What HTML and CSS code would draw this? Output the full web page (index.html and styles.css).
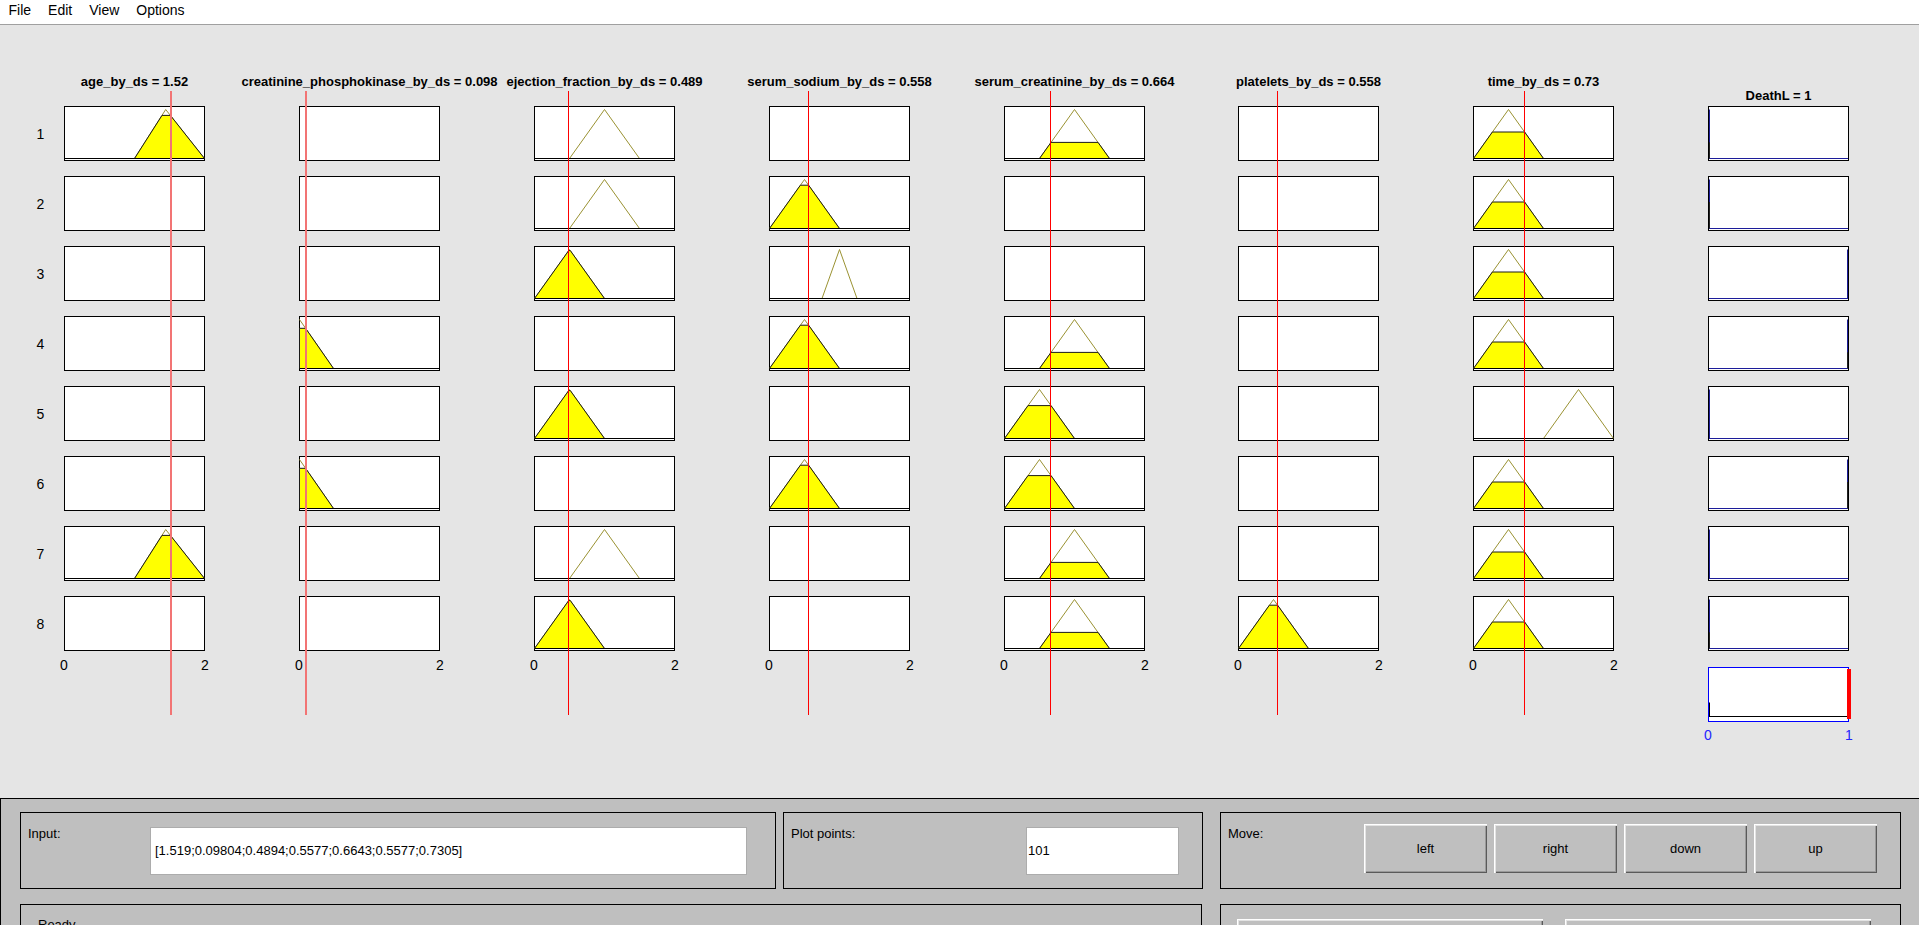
FILE: index.html
```html
<!DOCTYPE html>
<html>
<head>
<meta charset="utf-8">
<title>Rule Viewer</title>
<link rel="stylesheet" href="styles.css">
</head>
<body>
<div class="menubar"><span class="mi">File</span><span class="mi">Edit</span><span class="mi">View</span><span class="mi">Options</span></div>

<div class="main">
  <div class="rowlabels">
    <div class="rl">1</div><div class="rl">2</div><div class="rl">3</div><div class="rl">4</div>
    <div class="rl">5</div><div class="rl">6</div><div class="rl">7</div><div class="rl">8</div>
  </div>

  <div class="cols">
    <!-- age -->
    <div class="col">
      <div class="title">age_by_ds = 1.52</div>
      <div class="boxes">
        <svg class="box" viewBox="0 0 141 55"><rect class="bx" x="0.5" y="0.5" width="140" height="54"/><polyline class="mf" points="70.5,52.5 101.7,3.5 140.5,52.5"/><polygon class="fill" points="70.5,52.5 98,9.4 106.4,9.4 140.5,52.5"/><line class="base" x1="0.5" y1="52.5" x2="140.5" y2="52.5"/></svg>
        <svg class="box" viewBox="0 0 141 55"><rect class="bx" x="0.5" y="0.5" width="140" height="54"/></svg>
        <svg class="box" viewBox="0 0 141 55"><rect class="bx" x="0.5" y="0.5" width="140" height="54"/></svg>
        <svg class="box" viewBox="0 0 141 55"><rect class="bx" x="0.5" y="0.5" width="140" height="54"/></svg>
        <svg class="box" viewBox="0 0 141 55"><rect class="bx" x="0.5" y="0.5" width="140" height="54"/></svg>
        <svg class="box" viewBox="0 0 141 55"><rect class="bx" x="0.5" y="0.5" width="140" height="54"/></svg>
        <svg class="box" viewBox="0 0 141 55"><rect class="bx" x="0.5" y="0.5" width="140" height="54"/><polyline class="mf" points="70.5,52.5 101.7,3.5 140.5,52.5"/><polygon class="fill" points="70.5,52.5 98,9.4 106.4,9.4 140.5,52.5"/><line class="base" x1="0.5" y1="52.5" x2="140.5" y2="52.5"/></svg>
        <svg class="box" viewBox="0 0 141 55"><rect class="bx" x="0.5" y="0.5" width="140" height="54"/></svg>
      </div>
      <div class="ticks"><span>0</span><span>2</span></div>
      <div class="cursor wide" style="left:106px"></div>
    </div>

    <!-- creatinine_phosphokinase -->
    <div class="col">
      <div class="title">creatinine_phosphokinase_by_ds = 0.098</div>
      <div class="boxes">
        <svg class="box" viewBox="0 0 141 55"><rect class="bx" x="0.5" y="0.5" width="140" height="54"/></svg>
        <svg class="box" viewBox="0 0 141 55"><rect class="bx" x="0.5" y="0.5" width="140" height="54"/></svg>
        <svg class="box" viewBox="0 0 141 55"><rect class="bx" x="0.5" y="0.5" width="140" height="54"/></svg>
        <svg class="box" viewBox="0 0 141 55"><rect class="bx" x="0.5" y="0.5" width="140" height="54"/><polyline class="mf" points="0.5,3.5 34.5,52.5"/><polygon class="fill" points="0.5,52.5 0.5,12.3 6.6,12.3 34.5,52.5"/><line class="base" x1="0.5" y1="52.5" x2="140.5" y2="52.5"/></svg>
        <svg class="box" viewBox="0 0 141 55"><rect class="bx" x="0.5" y="0.5" width="140" height="54"/></svg>
        <svg class="box" viewBox="0 0 141 55"><rect class="bx" x="0.5" y="0.5" width="140" height="54"/><polyline class="mf" points="0.5,3.5 34.5,52.5"/><polygon class="fill" points="0.5,52.5 0.5,12.3 6.6,12.3 34.5,52.5"/><line class="base" x1="0.5" y1="52.5" x2="140.5" y2="52.5"/></svg>
        <svg class="box" viewBox="0 0 141 55"><rect class="bx" x="0.5" y="0.5" width="140" height="54"/></svg>
        <svg class="box" viewBox="0 0 141 55"><rect class="bx" x="0.5" y="0.5" width="140" height="54"/></svg>
      </div>
      <div class="ticks"><span>0</span><span>2</span></div>
      <div class="cursor wide" style="left:6px"></div>
    </div>

    <!-- ejection_fraction -->
    <div class="col">
      <div class="title">ejection_fraction_by_ds = 0.489</div>
      <div class="boxes">
        <svg class="box" viewBox="0 0 141 55"><rect class="bx" x="0.5" y="0.5" width="140" height="54"/><polyline class="mf" points="35.5,52.5 70.5,3.5 105.5,52.5"/><line class="base" x1="0.5" y1="52.5" x2="140.5" y2="52.5"/></svg>
        <svg class="box" viewBox="0 0 141 55"><rect class="bx" x="0.5" y="0.5" width="140" height="54"/><polyline class="mf" points="35.5,52.5 70.5,3.5 105.5,52.5"/><line class="base" x1="0.5" y1="52.5" x2="140.5" y2="52.5"/></svg>
        <svg class="box" viewBox="0 0 141 55"><rect class="bx" x="0.5" y="0.5" width="140" height="54"/><polyline class="mf" points="0.5,52.5 35.5,3.5 70.5,52.5"/><polygon class="fill" points="0.5,52.5 34.7,4.6 36.3,4.6 70.5,52.5"/><line class="base" x1="0.5" y1="52.5" x2="140.5" y2="52.5"/></svg>
        <svg class="box" viewBox="0 0 141 55"><rect class="bx" x="0.5" y="0.5" width="140" height="54"/></svg>
        <svg class="box" viewBox="0 0 141 55"><rect class="bx" x="0.5" y="0.5" width="140" height="54"/><polyline class="mf" points="0.5,52.5 35.5,3.5 70.5,52.5"/><polygon class="fill" points="0.5,52.5 34.7,4.6 36.3,4.6 70.5,52.5"/><line class="base" x1="0.5" y1="52.5" x2="140.5" y2="52.5"/></svg>
        <svg class="box" viewBox="0 0 141 55"><rect class="bx" x="0.5" y="0.5" width="140" height="54"/></svg>
        <svg class="box" viewBox="0 0 141 55"><rect class="bx" x="0.5" y="0.5" width="140" height="54"/><polyline class="mf" points="35.5,52.5 70.5,3.5 105.5,52.5"/><line class="base" x1="0.5" y1="52.5" x2="140.5" y2="52.5"/></svg>
        <svg class="box" viewBox="0 0 141 55"><rect class="bx" x="0.5" y="0.5" width="140" height="54"/><polyline class="mf" points="0.5,52.5 35.5,3.5 70.5,52.5"/><polygon class="fill" points="0.5,52.5 34.7,4.6 36.3,4.6 70.5,52.5"/><line class="base" x1="0.5" y1="52.5" x2="140.5" y2="52.5"/></svg>
      </div>
      <div class="ticks"><span>0</span><span>2</span></div>
      <div class="cursor" style="left:34px"></div>
    </div>

    <!-- serum_sodium -->
    <div class="col">
      <div class="title">serum_sodium_by_ds = 0.558</div>
      <div class="boxes">
        <svg class="box" viewBox="0 0 141 55"><rect class="bx" x="0.5" y="0.5" width="140" height="54"/></svg>
        <svg class="box" viewBox="0 0 141 55"><rect class="bx" x="0.5" y="0.5" width="140" height="54"/><polyline class="mf" points="0.5,52.5 35.5,3.5 70.5,52.5"/><polygon class="fill" points="0.5,52.5 31.4,9.2 39.6,9.2 70.5,52.5"/><line class="base" x1="0.5" y1="52.5" x2="140.5" y2="52.5"/></svg>
        <svg class="box" viewBox="0 0 141 55"><rect class="bx" x="0.5" y="0.5" width="140" height="54"/><polyline class="mf" points="53,52.5 70.5,3.5 88,52.5"/><line class="base" x1="0.5" y1="52.5" x2="140.5" y2="52.5"/></svg>
        <svg class="box" viewBox="0 0 141 55"><rect class="bx" x="0.5" y="0.5" width="140" height="54"/><polyline class="mf" points="0.5,52.5 35.5,3.5 70.5,52.5"/><polygon class="fill" points="0.5,52.5 31.4,9.2 39.6,9.2 70.5,52.5"/><line class="base" x1="0.5" y1="52.5" x2="140.5" y2="52.5"/></svg>
        <svg class="box" viewBox="0 0 141 55"><rect class="bx" x="0.5" y="0.5" width="140" height="54"/></svg>
        <svg class="box" viewBox="0 0 141 55"><rect class="bx" x="0.5" y="0.5" width="140" height="54"/><polyline class="mf" points="0.5,52.5 35.5,3.5 70.5,52.5"/><polygon class="fill" points="0.5,52.5 31.4,9.2 39.6,9.2 70.5,52.5"/><line class="base" x1="0.5" y1="52.5" x2="140.5" y2="52.5"/></svg>
        <svg class="box" viewBox="0 0 141 55"><rect class="bx" x="0.5" y="0.5" width="140" height="54"/></svg>
        <svg class="box" viewBox="0 0 141 55"><rect class="bx" x="0.5" y="0.5" width="140" height="54"/></svg>
      </div>
      <div class="ticks"><span>0</span><span>2</span></div>
      <div class="cursor" style="left:39px"></div>
    </div>

    <!-- serum_creatinine -->
    <div class="col">
      <div class="title">serum_creatinine_by_ds = 0.664</div>
      <div class="boxes">
        <svg class="box" viewBox="0 0 141 55"><rect class="bx" x="0.5" y="0.5" width="140" height="54"/><polyline class="mf" points="35.5,52.5 70.5,3.5 105.5,52.5"/><polygon class="fill" points="35.5,52.5 47,36.4 94,36.4 105.5,52.5"/><line class="base" x1="0.5" y1="52.5" x2="140.5" y2="52.5"/></svg>
        <svg class="box" viewBox="0 0 141 55"><rect class="bx" x="0.5" y="0.5" width="140" height="54"/></svg>
        <svg class="box" viewBox="0 0 141 55"><rect class="bx" x="0.5" y="0.5" width="140" height="54"/></svg>
        <svg class="box" viewBox="0 0 141 55"><rect class="bx" x="0.5" y="0.5" width="140" height="54"/><polyline class="mf" points="35.5,52.5 70.5,3.5 105.5,52.5"/><polygon class="fill" points="35.5,52.5 47,36.4 94,36.4 105.5,52.5"/><line class="base" x1="0.5" y1="52.5" x2="140.5" y2="52.5"/></svg>
        <svg class="box" viewBox="0 0 141 55"><rect class="bx" x="0.5" y="0.5" width="140" height="54"/><polyline class="mf" points="0.5,52.5 35.5,3.5 70.5,52.5"/><polygon class="fill" points="0.5,52.5 24,19.6 47,19.6 70.5,52.5"/><line class="base" x1="0.5" y1="52.5" x2="140.5" y2="52.5"/></svg>
        <svg class="box" viewBox="0 0 141 55"><rect class="bx" x="0.5" y="0.5" width="140" height="54"/><polyline class="mf" points="0.5,52.5 35.5,3.5 70.5,52.5"/><polygon class="fill" points="0.5,52.5 24,19.6 47,19.6 70.5,52.5"/><line class="base" x1="0.5" y1="52.5" x2="140.5" y2="52.5"/></svg>
        <svg class="box" viewBox="0 0 141 55"><rect class="bx" x="0.5" y="0.5" width="140" height="54"/><polyline class="mf" points="35.5,52.5 70.5,3.5 105.5,52.5"/><polygon class="fill" points="35.5,52.5 47,36.4 94,36.4 105.5,52.5"/><line class="base" x1="0.5" y1="52.5" x2="140.5" y2="52.5"/></svg>
        <svg class="box" viewBox="0 0 141 55"><rect class="bx" x="0.5" y="0.5" width="140" height="54"/><polyline class="mf" points="35.5,52.5 70.5,3.5 105.5,52.5"/><polygon class="fill" points="35.5,52.5 47,36.4 94,36.4 105.5,52.5"/><line class="base" x1="0.5" y1="52.5" x2="140.5" y2="52.5"/></svg>
      </div>
      <div class="ticks"><span>0</span><span>2</span></div>
      <div class="cursor" style="left:46px"></div>
    </div>

    <!-- platelets -->
    <div class="col shift">
      <div class="title">platelets_by_ds = 0.558</div>
      <div class="boxes">
        <svg class="box" viewBox="0 0 141 55"><rect class="bx" x="0.5" y="0.5" width="140" height="54"/></svg>
        <svg class="box" viewBox="0 0 141 55"><rect class="bx" x="0.5" y="0.5" width="140" height="54"/></svg>
        <svg class="box" viewBox="0 0 141 55"><rect class="bx" x="0.5" y="0.5" width="140" height="54"/></svg>
        <svg class="box" viewBox="0 0 141 55"><rect class="bx" x="0.5" y="0.5" width="140" height="54"/></svg>
        <svg class="box" viewBox="0 0 141 55"><rect class="bx" x="0.5" y="0.5" width="140" height="54"/></svg>
        <svg class="box" viewBox="0 0 141 55"><rect class="bx" x="0.5" y="0.5" width="140" height="54"/></svg>
        <svg class="box" viewBox="0 0 141 55"><rect class="bx" x="0.5" y="0.5" width="140" height="54"/></svg>
        <svg class="box" viewBox="0 0 141 55"><rect class="bx" x="0.5" y="0.5" width="140" height="54"/><polyline class="mf" points="0.5,52.5 35.5,3.5 70.5,52.5"/><polygon class="fill" points="0.5,52.5 31.4,9.2 39.6,9.2 70.5,52.5"/><line class="base" x1="0.5" y1="52.5" x2="140.5" y2="52.5"/></svg>
      </div>
      <div class="ticks"><span>0</span><span>2</span></div>
      <div class="cursor" style="left:39px"></div>
    </div>

    <!-- time -->
    <div class="col">
      <div class="title">time_by_ds = 0.73</div>
      <div class="boxes">
        <svg class="box" viewBox="0 0 141 55"><rect class="bx" x="0.5" y="0.5" width="140" height="54"/><polyline class="mf" points="0.5,52.5 35.5,3.5 70.5,52.5"/><polygon class="fill" points="0.5,52.5 19.4,26 51.6,26 70.5,52.5"/><line class="base" x1="0.5" y1="52.5" x2="140.5" y2="52.5"/></svg>
        <svg class="box" viewBox="0 0 141 55"><rect class="bx" x="0.5" y="0.5" width="140" height="54"/><polyline class="mf" points="0.5,52.5 35.5,3.5 70.5,52.5"/><polygon class="fill" points="0.5,52.5 19.4,26 51.6,26 70.5,52.5"/><line class="base" x1="0.5" y1="52.5" x2="140.5" y2="52.5"/></svg>
        <svg class="box" viewBox="0 0 141 55"><rect class="bx" x="0.5" y="0.5" width="140" height="54"/><polyline class="mf" points="0.5,52.5 35.5,3.5 70.5,52.5"/><polygon class="fill" points="0.5,52.5 19.4,26 51.6,26 70.5,52.5"/><line class="base" x1="0.5" y1="52.5" x2="140.5" y2="52.5"/></svg>
        <svg class="box" viewBox="0 0 141 55"><rect class="bx" x="0.5" y="0.5" width="140" height="54"/><polyline class="mf" points="0.5,52.5 35.5,3.5 70.5,52.5"/><polygon class="fill" points="0.5,52.5 19.4,26 51.6,26 70.5,52.5"/><line class="base" x1="0.5" y1="52.5" x2="140.5" y2="52.5"/></svg>
        <svg class="box" viewBox="0 0 141 55"><rect class="bx" x="0.5" y="0.5" width="140" height="54"/><polyline class="mf" points="70.5,52.5 105.5,3.5 140.5,52.5"/><line class="base" x1="0.5" y1="52.5" x2="140.5" y2="52.5"/></svg>
        <svg class="box" viewBox="0 0 141 55"><rect class="bx" x="0.5" y="0.5" width="140" height="54"/><polyline class="mf" points="0.5,52.5 35.5,3.5 70.5,52.5"/><polygon class="fill" points="0.5,52.5 19.4,26 51.6,26 70.5,52.5"/><line class="base" x1="0.5" y1="52.5" x2="140.5" y2="52.5"/></svg>
        <svg class="box" viewBox="0 0 141 55"><rect class="bx" x="0.5" y="0.5" width="140" height="54"/><polyline class="mf" points="0.5,52.5 35.5,3.5 70.5,52.5"/><polygon class="fill" points="0.5,52.5 19.4,26 51.6,26 70.5,52.5"/><line class="base" x1="0.5" y1="52.5" x2="140.5" y2="52.5"/></svg>
        <svg class="box" viewBox="0 0 141 55"><rect class="bx" x="0.5" y="0.5" width="140" height="54"/><polyline class="mf" points="0.5,52.5 35.5,3.5 70.5,52.5"/><polygon class="fill" points="0.5,52.5 19.4,26 51.6,26 70.5,52.5"/><line class="base" x1="0.5" y1="52.5" x2="140.5" y2="52.5"/></svg>
      </div>
      <div class="ticks"><span>0</span><span>2</span></div>
      <div class="cursor" style="left:51px"></div>
    </div>

    <!-- DeathL output -->
    <div class="col">
      <div class="title out">DeathL = 1</div>
      <div class="boxes">
        <svg class="box" viewBox="0 0 141 55"><rect class="bx" x="0.5" y="0.5" width="140" height="54"/><line class="ob" x1="1" y1="52.5" x2="140" y2="52.5"/><line class="ob" x1="1.5" y1="3.5" x2="1.5" y2="52.5"/><line class="ok" x1="1.5" y1="36.3" x2="1.5" y2="52.5"/></svg>
        <svg class="box" viewBox="0 0 141 55"><rect class="bx" x="0.5" y="0.5" width="140" height="54"/><line class="ob" x1="1" y1="52.5" x2="140" y2="52.5"/><line class="ob" x1="1.5" y1="3.5" x2="1.5" y2="52.5"/><line class="ok" x1="1.5" y1="26" x2="1.5" y2="52.5"/></svg>
        <svg class="box" viewBox="0 0 141 55"><rect class="bx" x="0.5" y="0.5" width="140" height="54"/><line class="ob" x1="1" y1="52.5" x2="140" y2="52.5"/><line class="ob" x1="139.5" y1="3.5" x2="139.5" y2="52.5"/></svg>
        <svg class="box" viewBox="0 0 141 55"><rect class="bx" x="0.5" y="0.5" width="140" height="54"/><line class="ob" x1="1" y1="52.5" x2="140" y2="52.5"/><line class="ob" x1="139.5" y1="3.5" x2="139.5" y2="52.5"/><line class="ok" x1="139.5" y1="36.3" x2="139.5" y2="52.5"/></svg>
        <svg class="box" viewBox="0 0 141 55"><rect class="bx" x="0.5" y="0.5" width="140" height="54"/><line class="ob" x1="1" y1="52.5" x2="140" y2="52.5"/><line class="ob" x1="1.5" y1="3.5" x2="1.5" y2="52.5"/></svg>
        <svg class="box" viewBox="0 0 141 55"><rect class="bx" x="0.5" y="0.5" width="140" height="54"/><line class="ob" x1="1" y1="52.5" x2="140" y2="52.5"/><line class="ob" x1="139.5" y1="3.5" x2="139.5" y2="52.5"/><line class="ok" x1="139.5" y1="26" x2="139.5" y2="52.5"/></svg>
        <svg class="box" viewBox="0 0 141 55"><rect class="bx" x="0.5" y="0.5" width="140" height="54"/><line class="ob" x1="1" y1="52.5" x2="140" y2="52.5"/><line class="ob" x1="1.5" y1="3.5" x2="1.5" y2="52.5"/></svg>
        <svg class="box" viewBox="0 0 141 55"><rect class="bx" x="0.5" y="0.5" width="140" height="54"/><line class="ob" x1="1" y1="52.5" x2="140" y2="52.5"/><line class="ob" x1="1.5" y1="3.5" x2="1.5" y2="52.5"/><line class="ok" x1="1.5" y1="36.3" x2="1.5" y2="52.5"/></svg>
      </div>
      <svg class="box agg" viewBox="0 0 141 55"><rect class="ab" x="0.5" y="0.5" width="140" height="54"/><line class="base" x1="1" y1="49.5" x2="139" y2="49.5"/><line class="base" x1="1.5" y1="35.5" x2="1.5" y2="49.5"/><rect class="dz" x="139" y="2" width="4" height="50"/></svg>
      <div class="ticks blue"><span>0</span><span>1</span></div>
    </div>
  </div>
</div>

<div class="panel">
  <div class="prow">
    <div class="frame f-input">
      <span class="lbl">Input:</span>
      <div class="edit e-input">[1.519;0.09804;0.4894;0.5577;0.6643;0.5577;0.7305]</div>
    </div>
    <div class="frame f-plot">
      <span class="lbl">Plot points:</span>
      <div class="edit e-plot">101</div>
    </div>
    <div class="frame f-move">
      <span class="lbl">Move:</span>
      <div class="btns">
        <button class="btn">left</button>
        <button class="btn">right</button>
        <button class="btn">down</button>
        <button class="btn">up</button>
      </div>
    </div>
  </div>
  <div class="prow r2">
    <div class="frame f-status"><span class="lbl status">Ready</span></div>
    <div class="frame f-help">
      <div class="btns2">
        <button class="btn wide" aria-label="Help"></button>
        <button class="btn wide" aria-label="Close"></button>
      </div>
    </div>
  </div>
</div>
</body>
</html>
```

FILE: styles.css
```css
html, body {
  margin: 0;
  padding: 0;
}
body {
  width: 1919px;
  height: 925px;
  overflow: hidden;
  background: #e5e5e5;
  font-family: "Liberation Sans", Arial, sans-serif;
  color: #000;
}

/* menu bar */
.menubar {
  height: 24px;
  border-bottom: 1px solid #a0a0a0;
  background: #fff;
  display: flex;
  font-size: 14px;
  line-height: 21px;
}
.mi {
  padding: 0 8.5px;
}

/* main plot area */
.main {
  height: 773px;
  box-sizing: border-box;
  padding-top: 49px;
  display: flex;
}
.rowlabels {
  width: 64px;
  padding-top: 32px;
  display: flex;
  flex-direction: column;
  gap: 15px;
}
.rl {
  height: 55px;
  line-height: 57px;
  box-sizing: border-box;
  padding-left: 17px;
  text-align: center;
  font-size: 14px;
}
.cols {
  display: flex;
  gap: 94px;
}
.col {
  position: relative;
  width: 141px;
  display: flex;
  flex-direction: column;
}
.col.shift {
  margin-left: -1px;
}
.title {
  height: 16px;
  line-height: 16px;
  font-size: 13px;
  font-weight: bold;
  white-space: nowrap;
  display: flex;
  justify-content: center;
  margin-bottom: 16px;
}
.title.out {
  padding-top: 14px;
  margin-bottom: 2px;
}
.boxes {
  display: flex;
  flex-direction: column;
  gap: 15px;
}
.box {
  display: block;
  width: 141px;
  height: 55px;
  overflow: visible;
}
.agg {
  margin-top: 16px;
}
.ticks {
  display: flex;
  justify-content: space-between;
  margin: 6px -7px 0;
  font-size: 14px;
  line-height: 16px;
}
.ticks span {
  width: 14px;
  text-align: center;
}
.ticks.blue {
  color: #2424ff;
  margin-top: 5px;
}
.cursor {
  position: absolute;
  top: 17px;
  width: 1px;
  height: 624px;
  background: #ff0000;
}
.cursor.wide {
  width: 2px;
  background: #f27474;
}

/* svg parts */
.bx {
  fill: #fff;
  stroke: #000;
  stroke-width: 1;
}
.mf {
  fill: none;
  stroke: #9a9232;
  stroke-width: 1;
}
.fill {
  fill: #ffff00;
  stroke: #1a1a1a;
  stroke-width: 1;
}
.base {
  stroke: #000;
  stroke-width: 1;
}
.ob {
  stroke: #1c1c9a;
  stroke-width: 1;
}
.ok {
  stroke: #222;
  stroke-width: 1;
}
.ab {
  fill: #fff;
  stroke: #0000ff;
  stroke-width: 1;
}
.dz {
  fill: #ff0000;
}

/* bottom control panel */
.panel {
  height: 127px;
  box-sizing: border-box;
  background: #bfbfbf;
  border-top: 1px solid #000;
  border-left: 1px solid #000;
  padding: 13px 0 0 19px;
}
.prow {
  display: flex;
}
.prow.r2 {
  margin-top: 15px;
}
.frame {
  height: 77px;
  box-sizing: border-box;
  border: 1px solid #000;
  display: flex;
  align-items: flex-start;
  padding: 13px 0 0 7px;
}
.lbl {
  font-size: 13px;
  line-height: 16px;
  white-space: nowrap;
}
.lbl.status {
  padding-left: 10px;
  margin-top: -1px;
}
.f-input {
  width: 756px;
  margin-right: 7px;
}
.f-plot {
  width: 420px;
  margin-right: 17px;
}
.f-move {
  width: 681px;
}
.f-status {
  width: 1182px;
  margin-right: 18px;
}
.f-help {
  width: 681px;
  padding-left: 16px;
}
.edit {
  height: 48px;
  box-sizing: border-box;
  margin-top: 1px;
  margin-left: auto;
  background: #fff;
  border: 1px solid #acacac;
  font-size: 13px;
  line-height: 46px;
  white-space: nowrap;
}
.e-input {
  width: 597px;
  margin-right: 28px;
  padding-left: 4px;
}
.e-plot {
  width: 153px;
  margin-right: 23px;
  padding-left: 1px;
}
.btns {
  margin-left: auto;
  margin-right: 23px;
  margin-top: -2px;
  display: flex;
  gap: 7px;
}
.btns2 {
  margin-top: 1px;
  display: flex;
  gap: 22px;
}
.btn {
  width: 123px;
  height: 49px;
  padding: 0;
  border: none;
  background: #bfbfbf;
  font-family: "Liberation Sans", Arial, sans-serif;
  font-size: 13px;
  color: #000;
  box-shadow: inset 1px 1px #ffffff, inset 2px 2px #e3e3e3, inset -1px -1px #5a5a5a, inset -2px -2px #9a9a9a;
}
.btn.wide {
  width: 306px;
}
```
